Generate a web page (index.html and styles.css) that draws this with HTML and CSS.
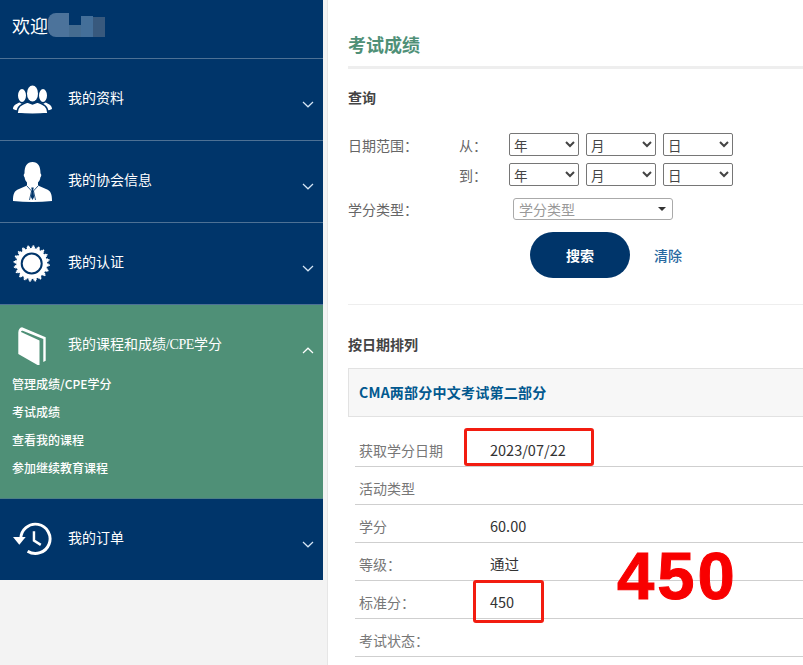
FILE: index.html
```html
<!DOCTYPE html>
<html lang="zh">
<head>
<meta charset="utf-8">
<title>考试成绩</title>
<link rel="stylesheet" href="styles.css">
</head>
<body>
<div class="page">
  <aside class="side">
    <div class="side-nav">
      <div class="welcome"><span>欢迎</span><span class="blur"><i class="b1"></i><i class="b2"></i><i class="b3"></i><i class="b4"></i></span></div>
      <div class="nav-item">
        <svg class="nav-icon" viewBox="0 0 39 42"><g fill="#fff"><ellipse cx="9" cy="17.500" rx="4" ry="6.500"/><path d="M0 31c0-3.500 3-5 6.500-6.500L9 26l3-1.500 2 2-8 4.500-1 1.500q-3-.200-5-1.500z"/><ellipse cx="30" cy="17.500" rx="4" ry="6.500"/><path d="M39 31c0-3.500-3-5-6.500-6.500L30 26l-3-1.500-2 2 8 4.500 1 1.500q3-.200 5-1.500z"/><path stroke="#00356a" stroke-width="1.500" d="M4 35.500c0-7 4-9 10.500-11.500l5 2 5-2c6.500 2.500 10.500 4.500 10.500 11.500q-15.500 1.500-31 0z"/><ellipse cx="19.500" cy="15.500" rx="5.500" ry="8"/></g></svg>
        <span class="nav-label">我的资料</span>
        <svg class="chev" viewBox="0 0 12 7"><path d="M1 1l5 4.800L11 1"/></svg>
      </div>
      <div class="nav-item">
        <svg class="nav-icon" viewBox="0 0 39 42"><path fill="#fff" d="M0 41c0-7 1-10 6-12l8-3.500v-3c-1.500-1.500-2-3-2.500-5.500-1-.5-1-3 0-3.500C11.500 6 14 2 19.500 2s8 4 8 11.500c1 .5 1 3 0 3.500-.5 2.500-1 4-2.500 5.500v3l8 3.500c5 2 6 5 6 12q-19.500 1.800-39 0z"/><path fill="none" stroke="#00356a" stroke-width=".8" d="M14 26l5.500 6 5.500-6M16.500 40l2-9M22.500 40l-2-9"/><path fill="#00356a" d="M18.300 27.500h2.400l-.4 2.500.8 7-1.600 3-1.600-3 .8-7z"/></svg>
        <span class="nav-label">我的协会信息</span>
        <svg class="chev" viewBox="0 0 12 7"><path d="M1 1l5 4.800L11 1"/></svg>
      </div>
      <div class="nav-item">
        <svg class="nav-icon" viewBox="0 0 39 42"><g fill="none" stroke="#fff"><circle cx="18.700" cy="21.500" r="16" stroke-width="2" pathLength="40" stroke-dasharray="1.300 .7"/><circle cx="18.700" cy="21.500" r="17.500" stroke-width="1.500" pathLength="40" stroke-dasharray=".6 1.400" stroke-dashoffset="-.35"/></g><circle cx="18.700" cy="21.500" r="15.500" fill="#fff"/><circle cx="18.700" cy="21.500" r="10" fill="none" stroke="#00356a" stroke-width="2"/></svg>
        <span class="nav-label">我的认证</span>
        <svg class="chev" viewBox="0 0 12 7"><path d="M1 1l5 4.800L11 1"/></svg>
      </div>
      <div class="nav-group">
        <div class="group-head">
          <svg class="nav-icon" viewBox="0 0 39 42"><path fill="#fff" d="M5.300 5.500Q5.500 1 9 .3L32.700 10.300V33.700L30.300 35V12L9.700 3.700Q8 3.500 8 5L26.500 13.500V38H24.500L5.300 27z"/></svg>
          <span class="group-label">我的课程和成绩<span class="cpe">/CPE</span>学分</span>
          <svg class="chev" viewBox="0 0 12 7"><path d="M1 6L6 1.200 11 6"/></svg>
        </div>
        <ul class="sub">
          <li>管理成绩/CPE学分</li>
          <li>考试成绩</li>
          <li>查看我的课程</li>
          <li>参加继续教育课程</li>
        </ul>
      </div>
      <div class="nav-item last">
        <svg class="nav-icon" viewBox="0 0 40 34"><g fill="none" stroke="#fff"><path stroke-width="3" d="M8 17A15 15 0 1 1 15 29.500"/><path stroke-width="2.500" d="M21.500 9v9.500l7 4.500"/></g><path fill="#fff" d="M0 15h13l-6.500 8z"/></svg>
        <span class="nav-label">我的订单</span>
        <svg class="chev" viewBox="0 0 12 7"><path d="M1 1l5 4.800L11 1"/></svg>
      </div>
    </div>
  </aside>
  <main class="main">
    <h1 class="title">考试成绩</h1>
    <h2 class="sec-head">查询</h2>
    <div class="form">
      <div class="date-row">
        <span class="f-label">日期范围：</span><span class="f-sub">从：</span>
        <span class="selects"><select class="sel"><option>年</option></select><select class="sel"><option>月</option></select><select class="sel"><option>日</option></select></span>
      </div>
      <div class="date-row">
        <span class="f-label"></span><span class="f-sub">到：</span>
        <span class="selects"><select class="sel"><option>年</option></select><select class="sel"><option>月</option></select><select class="sel"><option>日</option></select></span>
      </div>
      <div class="type-row">
        <span class="f-label wide">学分类型：</span>
        <span class="combo"><span>学分类型</span><i class="caret"></i></span>
      </div>
      <div class="actions">
        <button class="search" type="button">搜索</button>
        <a class="clear">清除</a>
      </div>
    </div>
    <h2 class="sec-head sort">按日期排列</h2>
    <div class="card-head">CMA两部分中文考试第二部分</div>
    <dl class="rows">
      <div class="row first"><dt>获取学分日期</dt><dd>2023/07/22</dd></div>
      <div class="row"><dt>活动类型</dt><dd></dd></div>
      <div class="row"><dt>学分</dt><dd>60.00</dd></div>
      <div class="row"><dt>等级：</dt><dd>通过</dd></div>
      <div class="row"><dt>标准分：</dt><dd>450</dd></div>
      <div class="row"><dt>考试状态：</dt><dd></dd></div>
    </dl>
    <div class="mark mark-date"></div>
    <div class="mark mark-score"></div>
    <div class="big-score">450</div>
  </main>
</div>
</body>
</html>
```
FILE: styles.css
```css
* { box-sizing: border-box; }
html, body { margin: 0; height: 100%; overflow: hidden; }
body { background: #f3f3f3; font-family: "Noto Sans CJK SC", "Open Sans", sans-serif; }
.page { display: flex; height: 665px; width: 803px; }
.side { width: 328px; flex: none; border-right: 1px solid #e6e6e6; padding-right: 4px; }
.side-nav { background: #00356a; color: #fff; }
.welcome { height: 59px; border-bottom: 1px solid #4d7195; padding: 12px 0 0 12px; font-size: 18px; line-height: 26px; display: flex; }
.blur { display: flex; height: 24px; margin-top: 1px; }
.blur i { display: block; width: 12px; height: 24px; }
.blur .b1 { background: #4c739b; width: 21px; border-radius: 8px 0 0 8px; }
.blur .b2 { background: #456c90; margin-top: 12px; height: 12px; }
.blur .b3 { background: #446f99; margin-top: 3px; height: 21px; }
.blur .b4 { background: #38597d; margin-top: 4px; height: 20px; }
.nav-item { height: 82px; border-bottom: 1px solid #4d7195; display: flex; align-items: flex-start; position: relative; padding-left: 13px; }
.nav-item.last { border: 0; height: 81px; }
.nav-icon { width: 39px; height: 42px; margin-top: 19px; flex: none; }
.nav-label, .group-label { font-size: 14px; line-height: 20px; margin: 28px 0 0 16px; }
.chev { width: 12px; height: 7px; position: absolute; left: 301.500px; top: 42px; fill: none; stroke: #d5e6f5; stroke-width: 1.200; }
.nav-group { background: #4f9077; height: 194px; border-bottom: 1px solid #4d7f87; }
.group-head { display: flex; height: 65px; position: relative; padding-left: 13px; }
.group-head .nav-icon { margin-top: 22px; }
.group-head .chev { stroke: #fff; }
.cpe { font-family: "Liberation Serif", serif; letter-spacing: -.4px; }
.sub { list-style: none; margin: 0; padding: 0 0 0 12px; font-size: 12px; font-weight: 500; line-height: 28px; }
.main { flex: 1; min-width: 0; background: #fff; padding-left: 20px; position: relative; }
.title { margin: 31px 0 0; padding-bottom: 11px; height: 38px; border-bottom: 3px solid #eeeeee; font-size: 18px; line-height: 26px; font-weight: 700; color: #4f9077; }
.sec-head { margin: 17px 0 0; font-size: 14px; line-height: 22px; font-weight: 700; color: #444; }
.form { height: 172px; margin-top: 25px; border-bottom: 1px solid #eeeeee; font-size: 14px; color: #666; }
.date-row { display: flex; align-items: center; height: 23px; margin-bottom: 7px; }
.f-label { width: 111px; flex: none; }
.f-sub { width: 50px; flex: none; color: #666; }
.selects { display: flex; gap: 7px; }
.sel { width: 70px; height: 23px; padding: 0; font: 13.500px "Noto Sans CJK SC", sans-serif; color: #444; background: #fff; border: 1px solid #767676; border-radius: 2px; }
.type-row { display: flex; align-items: center; height: 22px; margin-top: 12px; }
.f-label.wide { width: 165px; }
.combo { width: 160px; height: 22px; border: 1px solid #aaa; border-radius: 3px; display: flex; align-items: center; justify-content: space-between; padding: 0 5px; color: #999; }
.caret { width: 0; height: 0; border: 4px solid transparent; border-top-color: #333; border-bottom: 0; margin-right: 1px; }
.actions { display: flex; align-items: center; margin: 12px 0 0 182px; }
.search { width: 100px; height: 46px; border: 0; border-radius: 23px; background: #00356a; color: #fff; font: 700 14px "Noto Sans CJK SC", sans-serif; }
.clear { margin-left: 24px; font-size: 14px; font-weight: 500; color: #27689f; }
.sec-head.sort { margin-top: 28px; }
.card-head { margin-top: 13px; height: 49px; background: #f7f7f7; border: 1px solid #e2e2e2; border-right: 0; padding-left: 10px; font-size: 14px; font-weight: 700; letter-spacing: .25px; line-height: 47px; color: #02598f; }
.rows { margin: 0 0 0 7px; font-size: 14px; }
.row { display: flex; height: 38px; border-bottom: 1px solid #cfcfcf; align-items: center; padding-left: 4px; padding-top: 4px; }
.row.first { height: 50px; padding-top: 16px; }
.rows dt { width: 131px; color: #777; flex: none; }
.rows dd { margin: 0; color: #333; font-size: 14.500px; }
.mark { position: absolute; border: 3px solid #f21c10; border-radius: 3px; }
.mark-date { left: 136px; top: 428px; width: 130px; height: 38px; }
.mark-score { left: 145px; top: 580px; width: 71px; height: 43px; }
.big-score { position: absolute; left: 289px; top: 536px; font: 700 67px/80px "Liberation Sans", sans-serif; letter-spacing: 3px; -webkit-text-stroke: 1px #f80000; color: #f80000; }
```
